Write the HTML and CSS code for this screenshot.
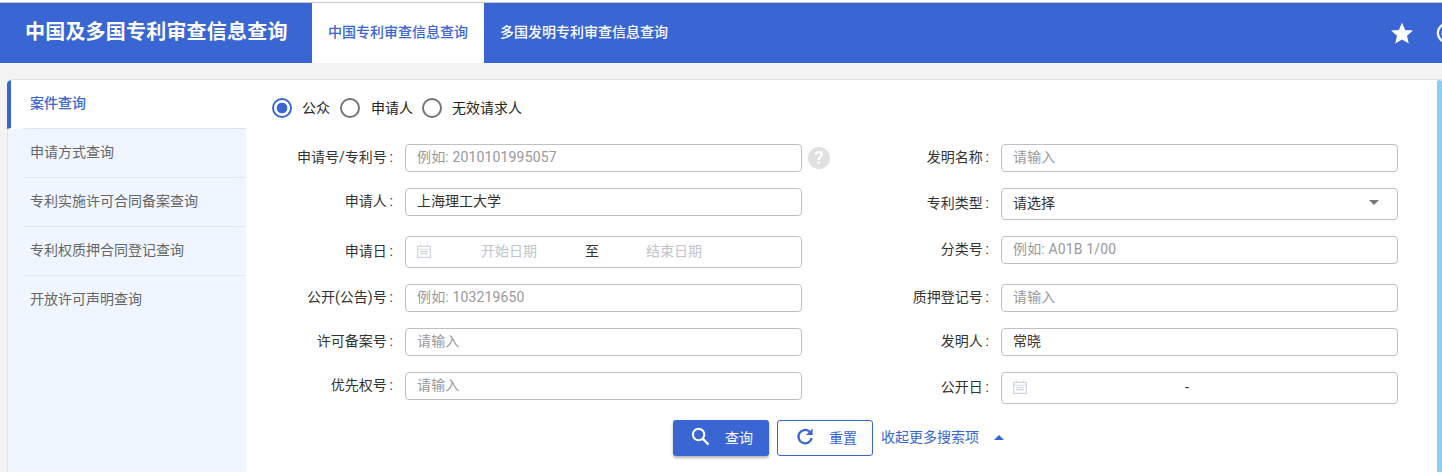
FILE: index.html
```html
<!DOCTYPE html>
<html lang="zh-CN">
<head>
<meta charset="utf-8">
<title>中国及多国专利审查信息查询</title>
<link rel="stylesheet" href="styles.css">
</head>
<body>
<div class="page">
  <div class="topline"></div>
  <header class="topbar">
    <h1 class="brand">中国及多国专利审查信息查询</h1>
    <nav class="tabs">
      <a class="tab tab-active">中国专利审查信息查询</a>
      <a class="tab">多国发明专利审查信息查询</a>
    </nav>
    <div class="top-icons">
      <svg class="star" viewBox="0 0 24 24"><path d="M12 1.500l3.100 7.400 7.900.7-6 5.200 1.800 7.800L12 18.500l-6.800 4.100L7 14.800 1 9.600l7.900-.7z"/></svg>
      <svg class="check" viewBox="0 0 24 24"><circle cx="12" cy="12" r="10" fill="none" stroke="#fff" stroke-width="2.500"/><path d="M6.500 12l4 4 7-7.500" fill="none" stroke="#fff" stroke-width="3"/></svg>
    </div>
  </header>
  <main class="card">
    <aside class="side">
      <a class="side-item side-active">案件查询</a>
      <a class="side-item">申请方式查询</a>
      <a class="side-item">专利实施许可合同备案查询</a>
      <a class="side-item">专利权质押合同登记查询</a>
      <a class="side-item">开放许可声明查询</a>
    </aside>
    <section class="content">
      <div class="radios">
        <span class="radio radio-on"></span><span class="radio-text r1">公众</span>
        <span class="radio"></span><span class="radio-text">申请人</span>
        <span class="radio"></span><span class="radio-text r3">无效请求人</span>
      </div>
      <form class="form">
        <label class="lbl">申请号/专利号&#8201;:</label>
        <div class="field ph">例如: 2010101995057</div>
        <div class="help">?</div>
        <label class="lbl">发明名称&#8201;:</label>
        <div class="field ph">请输入</div>

        <label class="lbl">申请人&#8201;:</label>
        <div class="field val">上海理工大学</div>
        <div></div>
        <label class="lbl lbl-tall">专利类型&#8201;:</label>
        <div class="field tall val select">请选择<span class="caret"></span></div>

        <label class="lbl lbl-tall">申请日&#8201;:</label>
        <div class="field tall date">
          <svg class="cal" viewBox="1 1 12 12"><path d="M1.500 3h11v9.500h-11zM1.500 5.500h11M4 1.500V3M10 1.500V3M3.500 7.500h7M3.500 9.500h7" fill="none" stroke="#cfd6df"/></svg>
          <span class="date-a">开始日期</span><span class="date-to">至</span><span class="date-b">结束日期</span>
        </div>
        <div></div>
        <label class="lbl">分类号&#8201;:</label>
        <div class="field ph">例如: A01B 1/00</div>

        <label class="lbl">公开(公告)号&#8201;:</label>
        <div class="field ph">例如: 103219650</div>
        <div></div>
        <label class="lbl">质押登记号&#8201;:</label>
        <div class="field ph">请输入</div>

        <label class="lbl">许可备案号&#8201;:</label>
        <div class="field ph">请输入</div>
        <div></div>
        <label class="lbl">发明人&#8201;:</label>
        <div class="field val">常晓</div>

        <label class="lbl">优先权号&#8201;:</label>
        <div class="field ph">请输入</div>
        <div></div>
        <label class="lbl lbl-tall">公开日&#8201;:</label>
        <div class="field tall date">
          <svg class="cal" viewBox="1 1 12 12"><path d="M1.500 3h11v9.500h-11zM1.500 5.500h11M4 1.500V3M10 1.500V3M3.500 7.500h7M3.500 9.500h7" fill="none" stroke="#cfd6df"/></svg>
          <span class="date-dash">-</span>
        </div>
      </form>
      <div class="actions">
        <button class="btn btn-primary" type="button">
          <svg class="btn-icon" viewBox="0 0 20 20"><circle cx="8" cy="8" r="6" fill="none" stroke="#fff" stroke-width="2.200"/><path d="M12.500 12.500l6 6" stroke="#fff" stroke-width="2.400"/></svg>查询
        </button>
        <button class="btn btn-outline" type="button">
          <svg class="btn-icon" viewBox="0 0 20 20"><path d="M16.500 11.500a7 7 0 1 1-2.300-6.700" fill="none" stroke="#3966d2" stroke-width="2.400"/><path d="M17.500 1.500v7h-7z" fill="#3966d2"/></svg>重置
        </button>
        <a class="more">收起更多搜索项</a>
        <span class="caret-up"></span>
      </div>
    </section>
    <div class="scroll"></div>
  </main>
</div>
</body>
</html>
```
FILE: styles.css
```css
* { box-sizing: border-box; }
html, body { margin: 0; padding: 0; height: 472px; overflow: hidden; }
body {
  font-family: Roboto, "Noto Sans CJK SC", sans-serif;
  font-size: 14px;
  color: #222;
  background: #f3f3f3;
}
.page { width: 1442px; height: 472px; overflow: hidden; }
.topline { height: 2px; background: #fff; }
.topbar {
  display: flex;
  align-items: stretch;
  height: 61px;
  background: #3966d2;
  border-top: 1px solid #c8c8c8;
}
.brand {
  width: 312px;
  margin: 0;
  padding-left: 25px;
  font-size: 20px;
  line-height: 58px;
  font-weight: 700;
  color: #fff;
  letter-spacing: .2px;
  white-space: nowrap;
}
.tabs { display: flex; }
.tab {
  padding: 0 16px;
  line-height: 58px;
  color: #fff;
  font-weight: 500;
  white-space: nowrap;
}
.tab-active { background: #fff; color: #3966d2; width: 172px; padding-right: 0; }
.top-icons {
  margin-left: auto;
  display: flex;
  align-items: center;
  gap: 22px;
  width: 52px;
  flex: none;
  overflow: hidden;
}
.star { width: 24px; height: 24px; flex: none; fill: #fff; }
.check { width: 22px; height: 22px; flex: none; }
.card {
  display: flex;
  height: 393px;
  margin: 16px 0 0 7px;
  background: #fff;
  border-top: 1px solid #e2e2e2;
  border-radius: 5px 0 0 0;
  position: relative;
  overflow: hidden;
}
.side { width: 239px; flex: none; background: #eff6ff; border-left: 1px solid #e2e2e2; }
.side-item {
  display: block;
  height: 49px;
  line-height: 46px;
  padding-left: 22px;
  color: #666;
  font-size: 14px;
  position: relative;
  border-bottom: 1px solid transparent;
}
.side-item::after {
  content: "";
  position: absolute;
  left: 15px;
  right: 0;
  bottom: -1px;
  height: 1px;
  background: #dde8f5;
}
.side-item:last-child::after { display: none; }
.side-active {
  background: #fff;
  color: #3966d2;
  font-weight: 500;
  border-left: 4px solid #3966d2;
  margin-left: -1px;
  padding-left: 19px;
}
.side-active::after { left: 12px; background: #d5e5f8; }
.content { flex: 1; min-width: 0; position: relative; }
.radios {
  display: flex;
  align-items: center;
  height: 20px;
  margin: 18px 0 0 26px;
}
.radio {
  width: 20px;
  height: 20px;
  flex: none;
  border: 2px solid #757575;
  border-radius: 50%;
  background: #fff;
}
.radio-on {
  border-color: #3966d2;
  background: radial-gradient(circle, #3966d2 0, #3966d2 5px, #fff 5.700px);
}
.radio-text { margin: -2px 9px 0 11px; }
.r1 { margin-left: 10px; margin-right: 10px; }
.r3 { margin-left: 10px; }
.form {
  display: grid;
  grid-template-columns: 159px 397px 58px 141px 397px;
  grid-template-rows: 28px 32px 32px 28px 28px 32px;
  row-gap: 16px;
  margin-top: 26px;
  align-items: start;
}
.lbl {
  display: block;
  line-height: 27px;
  padding-right: 12px;
  text-align: right;
  font-size: 14px;
  color: #333;
  white-space: nowrap;
}
.lbl-tall { line-height: 31px; }
.field {
  height: 28px;
  line-height: 25px;
  padding-left: 11px;
  border: 1px solid #bfbfbf;
  border-radius: 4px;
  font-size: 14px;
  background: #fff;
  white-space: nowrap;
}
.ph { color: #999; letter-spacing: .15px; }
.val { color: #333; }
.tall { height: 32px; line-height: 28px; }
.help {
  width: 22px;
  height: 22px;
  margin: 3px 0 0 6px;
  border-radius: 50%;
  background: #e0e0e0;
  color: #fff;
  font-size: 19px;
  font-weight: 700;
  line-height: 22px;
  text-align: center;
}
.select { position: relative; }
.caret {
  position: absolute;
  right: 18px;
  top: 11px;
  border: 5px solid transparent;
  border-top: 5px solid #777;
  border-bottom: 0;
}
.date { display: flex; align-items: center; position: relative; padding-bottom: 2px; }
.cal { width: 14px; height: 14px; flex: none; }
.date-a, .date-b { position: absolute; color: #c0c4cc; }
.date-a { left: 75px; }
.date-to { position: absolute; left: 179px; color: #333; top: 0; }
.date-b { left: 240px; }
.date-dash { position: absolute; left: 183px; color: #333; }
.actions {
  display: flex;
  align-items: center;
  margin: 16px 0 0 427px;
  height: 36px;
}
.btn {
  width: 96px;
  height: 36px;
  display: flex;
  align-items: center;
  padding: 0 0 3px 18px;
  font: inherit;
  font-size: 14px;
  border-radius: 3px;
  cursor: pointer;
}
.btn-icon { width: 19px; height: 19px; margin-right: 15px; flex: none; }
.btn-primary {
  background: #3966d2;
  color: #fff;
  border: 0;
  box-shadow: 0 2px 3px rgba(0,0,0,.3);
}
.btn-outline {
  margin-left: 8px;
  background: #fff;
  color: #3966d2;
  border: 1px solid #3966d2;
}
.btn-outline .btn-icon { margin-right: 14px; }
.more { margin: 0 0 4px 8px; color: #3966d2; font-size: 14px; }
.caret-up {
  margin: 0 0 1px 15px;
  border: 5px solid transparent;
  border-bottom: 5px solid #3966d2;
  border-top: 0;
}
.scroll {
  position: absolute;
  right: 0;
  top: 0;
  width: 5px;
  height: 100%;
  background: #8ccdf8;
  border-radius: 3px 3px 0 0;
}
```
